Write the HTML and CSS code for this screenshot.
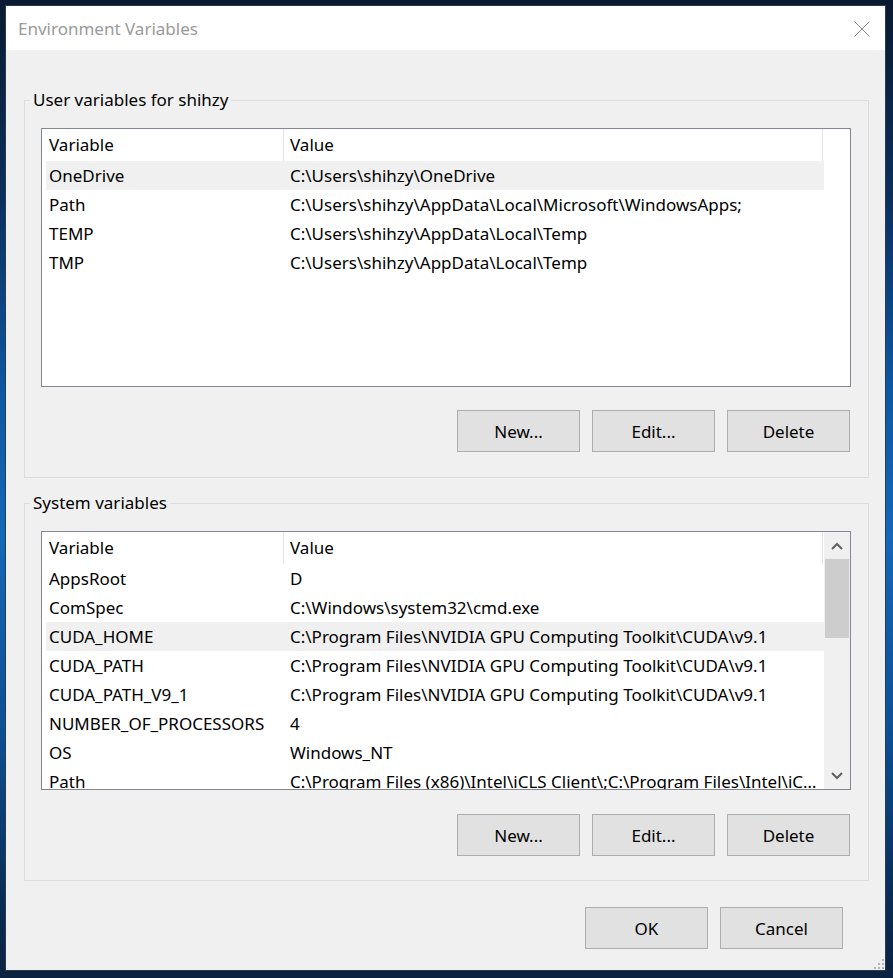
FILE: index.html
```html
<!DOCTYPE html>
<html lang="en">
<head>
    <meta charset="UTF-8">
    <title>Environment Variables</title>
    <link rel="stylesheet" href="styles.css">
</head>
<body>
    <div class="window">
        <div class="titlebar">
            <span class="title">Environment Variables</span>
            <span class="close">
                <svg width="16" height="16" viewBox="0 0 16 16"><path d="M0.5 0.5 L15.5 15.5 M15.5 0.5 L0.5 15.5" stroke="#8a8a8a" stroke-width="1" fill="none"/></svg>
            </span>
        </div>

        <div class="content">
            <fieldset class="group">
                <legend>User variables for shihzy</legend>
                <div class="group-body">
                    <div class="list">
                        <div class="rows">
                            <div class="row head"><div class="cell">Variable</div><div class="cell">Value</div></div>
                            <div class="row selected"><div class="cell">OneDrive</div><div class="cell">C:\Users\shihzy\OneDrive</div></div>
                            <div class="row"><div class="cell">Path</div><div class="cell">C:\Users\shihzy\AppData\Local\Microsoft\WindowsApps;</div></div>
                            <div class="row"><div class="cell">TEMP</div><div class="cell">C:\Users\shihzy\AppData\Local\Temp</div></div>
                            <div class="row"><div class="cell">TMP</div><div class="cell">C:\Users\shihzy\AppData\Local\Temp</div></div>
                        </div>
                    </div>
                    <div class="buttons">
                        <button class="btn">New...</button>
                        <button class="btn">Edit...</button>
                        <button class="btn">Delete</button>
                    </div>
                </div>
            </fieldset>

            <fieldset class="group second">
                <legend>System variables</legend>
                <div class="group-body">
                    <div class="list">
                        <div class="rows">
                            <div class="row head"><div class="cell">Variable</div><div class="cell">Value</div></div>
                            <div class="row"><div class="cell">AppsRoot</div><div class="cell">D</div></div>
                            <div class="row"><div class="cell">ComSpec</div><div class="cell">C:\Windows\system32\cmd.exe</div></div>
                            <div class="row selected"><div class="cell">CUDA_HOME</div><div class="cell">C:\Program Files\NVIDIA GPU Computing Toolkit\CUDA\v9.1</div></div>
                            <div class="row"><div class="cell">CUDA_PATH</div><div class="cell">C:\Program Files\NVIDIA GPU Computing Toolkit\CUDA\v9.1</div></div>
                            <div class="row"><div class="cell">CUDA_PATH_V9_1</div><div class="cell">C:\Program Files\NVIDIA GPU Computing Toolkit\CUDA\v9.1</div></div>
                            <div class="row"><div class="cell">NUMBER_OF_PROCESSORS</div><div class="cell">4</div></div>
                            <div class="row"><div class="cell">OS</div><div class="cell">Windows_NT</div></div>
                            <div class="row"><div class="cell">Path</div><div class="cell">C:\Program Files (x86)\Intel\iCLS Client\;C:\Program Files\Intel\iCLS Client\;C:\Windows\system32</div></div>
                        </div>
                        <div class="scrollbar">
                            <div class="sb-btn">
                                <svg width="12" height="8" viewBox="0 0 12 8"><polyline points="1,7 6,2 11,7" stroke="#606060" stroke-width="2" fill="none"/></svg>
                            </div>
                            <div class="sb-thumb"></div>
                            <div class="sb-track"></div>
                            <div class="sb-btn">
                                <svg width="12" height="8" viewBox="0 0 12 8"><polyline points="1,1 6,6 11,1" stroke="#606060" stroke-width="2" fill="none"/></svg>
                            </div>
                        </div>
                    </div>
                    <div class="buttons">
                        <button class="btn">New...</button>
                        <button class="btn">Edit...</button>
                        <button class="btn">Delete</button>
                    </div>
                </div>
            </fieldset>

            <div class="dialog-buttons">
                <button class="btn">OK</button>
                <button class="btn">Cancel</button>
            </div>
        </div>

        <svg class="grip" width="12" height="12" viewBox="0 0 12 12">
            <rect x="9" y="1" width="2" height="2" fill="#b5b5b5"/>
            <rect x="5" y="5" width="2" height="2" fill="#b5b5b5"/>
            <rect x="9" y="5" width="2" height="2" fill="#b5b5b5"/>
            <rect x="1" y="9" width="2" height="2" fill="#b5b5b5"/>
            <rect x="5" y="9" width="2" height="2" fill="#b5b5b5"/>
            <rect x="9" y="9" width="2" height="2" fill="#b5b5b5"/>
        </svg>
    </div>
</body>
</html>
```

FILE: styles.css
```css
* {
    margin: 0;
    padding: 0;
    box-sizing: border-box;
}

body {
    font-family: 'Noto Sans', 'Open Sans', sans-serif;
    font-size: 17px;
    color: #000;
    padding: 5px 0 0 5px;
    height: 978px;
    overflow: hidden;
    background: linear-gradient(180deg, #0a1a30 0%, #0b2f5c 20%, #0d58a4 40%, #1468b8 55%, #0c4f95 75%, #0a2c55 92%, #0b2240 100%);
}

/* Window frame */
.window {
    position: relative;
    width: 881px;
    height: 966px;
    border: 1px solid #2b3b4e;
    background-color: #f0f0f0;
}

.titlebar {
    display: flex;
    justify-content: space-between;
    align-items: center;
    height: 44px;
    background-color: #fff;
    padding: 0 15px 0 12px;
}

.title {
    color: #9a9a9a;
    line-height: 44px;
    padding-top: 2px;
}

.close {
    display: flex;
    margin-top: 1px;
}

.content {
    padding: 38px 16px 0 18px;
}

/* Group boxes */
.group {
    border: 1px solid #dcdcdc;
    width: 845px;
}

.group.second {
    margin-top: 13px;
}

.group legend {
    margin-left: 5px;
    padding: 0 3px;
    line-height: 24px;
}

.group-body {
    padding: 16px 17px 25px 16px;
}

.group.second .group-body {
    padding-bottom: 24px;
}

/* List views */
.list {
    display: flex;
    height: 259px;
    border: 1px solid #828790;
    background-color: #fff;
    overflow: hidden;
}

.rows {
    width: 782px;
    padding-left: 4px;
}

.row {
    display: grid;
    grid-template-columns: 238px 539px;
    height: 29px;
    line-height: 29px;
}

.row .cell {
    white-space: nowrap;
    overflow: hidden;
    text-overflow: ellipsis;
    padding: 0 5px 0 6px;
}

.row .cell:first-child {
    padding-left: 3px;
}

.row.head {
    height: 32px;
    line-height: 32px;
}

.row.head .cell {
    border-right: 1px solid #e5e5e5;
}

.row.selected {
    background-color: #f0f0f0;
}

/* Scrollbar */
.scrollbar {
    display: flex;
    flex-direction: column;
    width: 26px;
    margin-left: auto;
    background-color: #f0f0f0;
}

.sb-btn {
    display: flex;
    justify-content: center;
    align-items: center;
    height: 27px;
}

.sb-thumb {
    height: 79px;
    margin: 0 1px;
    background-color: #cdcdcd;
}

.sb-track {
    flex: 1;
}

/* Buttons */
.buttons {
    display: flex;
    justify-content: flex-end;
    gap: 12px;
    margin-top: 23px;
    padding-right: 1px;
}

.group.second .buttons {
    margin-top: 24px;
}

.btn {
    width: 123px;
    height: 42px;
    background-color: #e1e1e1;
    border: 1px solid #adadad;
    font-family: inherit;
    font-size: 17px;
    color: #000;
}

.dialog-buttons {
    display: flex;
    justify-content: flex-end;
    gap: 12px;
    margin-top: 26px;
    padding-right: 26px;
}

.grip {
    position: absolute;
    right: 0;
    bottom: 0;
}
```
